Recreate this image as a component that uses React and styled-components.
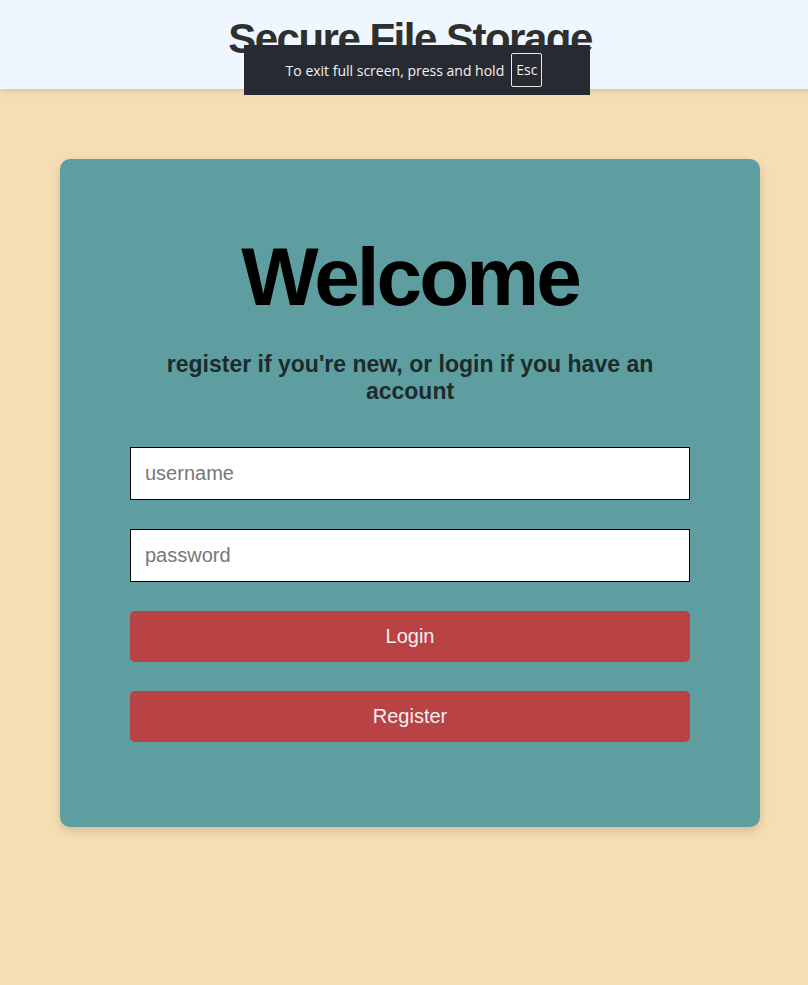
import styled, { createGlobalStyle } from "styled-components";

const GlobalStyle = createGlobalStyle`
  html, body {
    margin: 0;
    padding: 0;
    background-color: #f5deb3;
    overflow: hidden;
  }
  * { box-sizing: border-box; }
`;

export default function App() {
  return (
    <Page>
      <GlobalStyle />
      <Header>
        <Title>Secure File Storage</Title>
        <FullscreenNotice>
          To exit full screen, press and hold <Key>Esc</Key>
        </FullscreenNotice>
      </Header>
      <Main>
        <Card>
          <Welcome>Welcome</Welcome>
          <Subtitle>register if you're new, or login if you have an account</Subtitle>
          <Form onSubmit={(e) => e.preventDefault()}>
            <Input type="text" placeholder="username" />
            <Input type="password" placeholder="password" />
            <Button type="submit">Login</Button>
            <Button type="button">Register</Button>
          </Form>
        </Card>
      </Main>
    </Page>
  );
}

const Page = styled.div`
  width: 820px;
  min-height: 985px;
  background-color: #f5deb3;
`;

const Header = styled.header`
  position: relative;
  height: 89px;
  background-color: #eef7ff;
  box-shadow: 0 2px 6px rgba(0, 0, 0, 0.12);
  display: flex;
  justify-content: center;
  align-items: flex-start;
`;

const Title = styled.h1`
  margin: 15px 0 0;
  font-family: "Liberation Sans", Arial, sans-serif;
  font-weight: 700;
  font-size: 42px;
  letter-spacing: -1.5px;
  color: #2f2f2f;
`;

const FullscreenNotice = styled.div`
  position: absolute;
  top: 45px;
  left: 244px;
  width: 346px;
  height: 50px;
  padding-right: 6px;
  background-color: #282a31;
  color: #f2f2f2;
  font-family: "Open Sans", "Noto Sans", sans-serif;
  font-size: 14px;
  display: flex;
  align-items: center;
  justify-content: center;
  gap: 7px;
`;

const Key = styled.span`
  border: 1px solid #e8e8e8;
  border-radius: 2px;
  padding: 6px 4px;
  line-height: 20px;
`;

const Main = styled.main`
  display: flex;
  justify-content: center;
  padding-top: 70px;
`;

const Card = styled.section`
  width: 700px;
  height: 668px;
  background-color: #5f9ea0;
  border-radius: 10px;
  box-shadow: 0 4px 10px rgba(0, 0, 0, 0.15);
  padding: 77px 70px 0;
  display: flex;
  flex-direction: column;
  align-items: center;
`;

const Welcome = styled.h2`
  margin: 0;
  font-family: "Liberation Sans", Arial, sans-serif;
  font-weight: 700;
  font-size: 82px;
  line-height: 82px;
  letter-spacing: -3px;
  color: #000;
`;

const Subtitle = styled.p`
  margin: 33px 0 0;
  width: 500px;
  text-align: center;
  font-family: "Liberation Sans", Arial, sans-serif;
  font-weight: 700;
  font-size: 23px;
  line-height: 27px;
  color: #1c2b2b;
`;

const Form = styled.form`
  margin-top: 42px;
  width: 560px;
  display: flex;
  flex-direction: column;
  gap: 29px;
`;

const Input = styled.input`
  height: 53px;
  width: 100%;
  border: 1px solid #000;
  border-radius: 0;
  background: #fff;
  padding: 0 14px;
  font-family: "Liberation Sans", Arial, sans-serif;
  font-size: 20px;
  color: #222;
  &::placeholder { color: #777; }
`;

const Button = styled.button`
  height: 51px;
  width: 100%;
  border: none;
  border-radius: 5px;
  background-color: #b94244;
  color: #f4f0f0;
  font-family: "Liberation Sans", Arial, sans-serif;
  font-size: 20px;
  cursor: pointer;
`;
